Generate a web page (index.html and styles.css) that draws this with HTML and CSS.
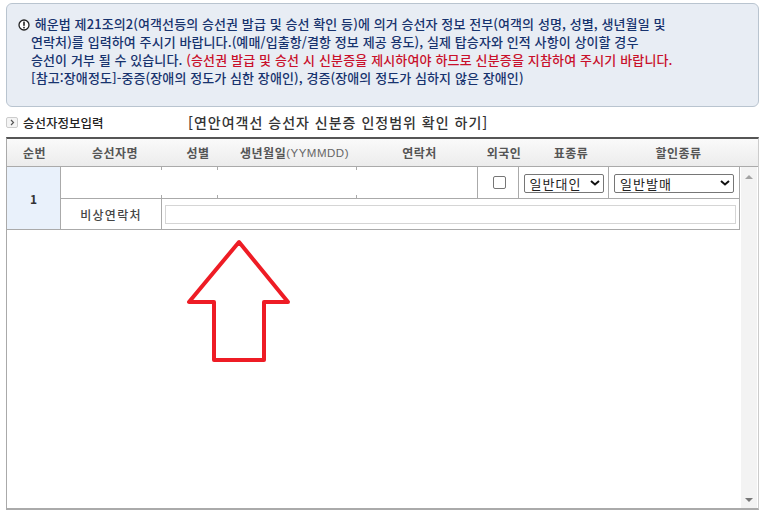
FILE: index.html
```html
<!DOCTYPE html>
<html lang="ko">
<head>
    <meta charset="UTF-8">
    <meta name="viewport" content="width=device-width, initial-scale=1.0">
    <title>승선자정보입력</title>
    <link rel="stylesheet" href="styles.css">
</head>
<body>
    <div class="container">
        <div class="notice">
            <p>
                <svg class="notice-icon" width="12" height="12" viewBox="0 0 12 12">
                    <circle cx="6" cy="6" r="5" fill="#fff" stroke="#222" stroke-width="1.3"/>
                    <rect x="5.2" y="2.6" width="1.6" height="4.2" fill="#222"/>
                    <rect x="5.2" y="7.8" width="1.6" height="1.6" fill="#222"/>
                </svg>
                해운법 제21조의2(여객선등의 승선권 발급 및 승선 확인 등)에 의거 승선자 정보 전부(여객의 성명, 성별, 생년월일 및
            </p>
            <p>연락처)를 입력하여 주시기 바랍니다.(예매/입출항/결항 정보 제공 용도), 실제 탑승자와 인적 사항이 상이할 경우</p>
            <p>승선이 거부 될 수 있습니다. <span class="red">(승선권 발급 및 승선 시 신분증을 제시하여야 하므로 신분증을 지참하여 주시기 바랍니다.</span></p>
            <p>[참고:장애정도]-중증(장애의 정도가 심한 장애인), 경증(장애의 정도가 심하지 않은 장애인)</p>
        </div>

        <div class="title-row">
            <div class="title">
                <span class="title-icon">
                    <svg width="5" height="7" viewBox="0 0 5 7"><path d="M1 1l2.5 2.5L1 6" fill="none" stroke="#555" stroke-width="1.2"/></svg>
                </span>
                승선자정보입력
            </div>
            <a class="id-link">[연안여객선 승선자 신분증 인정범위 확인 하기]</a>
        </div>

        <div class="panel">
            <div class="head">
                <div>순번</div>
                <div>승선자명</div>
                <div>성별</div>
                <div>생년월일<span class="thin">(YYMMDD)</span></div>
                <div>연락처</div>
                <div>외국인</div>
                <div>표종류</div>
                <div>할인종류</div>
            </div>

            <div class="body">
                <div class="rows">
                    <div class="record">
                        <div class="num">1</div>
                        <div class="fields">
                            <div class="row-top">
                                <div class="cell"></div>
                                <div class="cell"></div>
                                <div class="cell"></div>
                                <div class="cell"></div>
                                <div class="cell center"><span class="check"></span></div>
                                <div class="cell center">
                                    <div class="select ticket">일반대인<svg width="10" height="6" viewBox="0 0 10 6"><path d="M1 1l4 3.5L9 1" fill="none" stroke="#111" stroke-width="2"/></svg></div>
                                </div>
                                <div class="cell center">
                                    <div class="select discount">일반발매<svg width="10" height="6" viewBox="0 0 10 6"><path d="M1 1l4 3.5L9 1" fill="none" stroke="#111" stroke-width="2"/></svg></div>
                                </div>
                            </div>
                            <div class="row-bottom">
                                <div class="label">비상연락처</div>
                                <div class="input-cell"><div class="text-input"></div></div>
                            </div>
                        </div>
                    </div>
                </div>

                <div class="scrollbar">
                    <span class="up"></span>
                    <span class="down"></span>
                </div>

                <svg class="arrow" width="106" height="124" viewBox="0 0 106 124">
                    <path d="M53 3L3 63H28V121H78V63H102Z" fill="none" stroke="#ee1c25" stroke-width="4" stroke-linejoin="round"/>
                </svg>
            </div>
        </div>
    </div>
</body>
</html>
```

FILE: styles.css
```css
* {
    box-sizing: border-box;
}

body {
    margin: 0;
    background-color: #fff;
    font-family: "Noto Sans CJK KR", "Liberation Sans", sans-serif;
    color: #333;
}

.container {
    width: 753px;
    height: 507px;
    margin: 3px 0 0 6px;
    display: flex;
    flex-direction: column;
}

.notice {
    height: 104px;
    flex-shrink: 0;
    padding: 11px 12px 0 12px;
    background-color: #e8edf4;
    border: 1px solid #b9c4cf;
    border-radius: 6px;
    font-size: 13px;
    font-weight: 500;
    letter-spacing: 0.09px;
    color: #17336e;
}

.notice p {
    margin: 0 0 0 12px;
    height: 18px;
    line-height: 18px;
    white-space: nowrap;
}

.notice-icon {
    margin: 0 1px 0 -13px;
    vertical-align: -2px;
}

.red {
    color: #c9102b;
    letter-spacing: 0.15px;
}

.title-row {
    display: flex;
    align-items: center;
    height: 30px;
    flex-shrink: 0;
}

.title {
    width: 182px;
    display: flex;
    align-items: center;
    gap: 5px;
    font-size: 12.5px;
    font-weight: 500;
    color: #222;
}

.title-icon {
    width: 12px;
    height: 11px;
    display: flex;
    align-items: center;
    justify-content: center;
    border: 1px solid #ccc;
    border-radius: 2px;
    background-color: #f4f4f4;
}

.id-link {
    font-size: 14px;
    font-weight: 500;
    letter-spacing: 1px;
    color: #333;
}

.panel {
    flex: 1;
    display: flex;
    flex-direction: column;
    border-top: 2px solid #555;
    border-left: 1px solid #aaa;
    border-right: 1px solid #ccc;
    border-bottom: 2px solid #aaa;
}

.head {
    display: grid;
    grid-template-columns: 55px 106px 60px 133px 117px 52px 82px 133px;
    height: 28px;
    flex-shrink: 0;
    background: linear-gradient(#fafafa, #ececec);
    border-bottom: 1px solid #aaa;
    font-size: 12px;
    font-weight: 700;
    color: #555;
    letter-spacing: 0.5px;
}

.head div {
    display: flex;
    align-items: center;
    justify-content: center;
}

.thin {
    font-weight: 400;
    font-size: 11.5px;
    font-family: "Liberation Sans", sans-serif;
    color: #666;
}

.body {
    flex: 1;
    display: flex;
    position: relative;
}

.rows {
    width: 733px;
}

.record {
    display: flex;
    height: 63px;
    border-bottom: 1px solid #aaa;
    border-right: 1px solid #aaa;
}

.num {
    width: 54px;
    display: flex;
    align-items: center;
    justify-content: center;
    background-color: #e9f1fb;
    border-right: 1px solid #aaa;
    font-size: 12px;
    font-weight: 700;
    color: #333;
}

.fields {
    flex: 1;
    display: flex;
    flex-direction: column;
}

.row-top {
    display: grid;
    grid-template-columns: 101px 56px 139px 120px 41px 90px 131px;
    height: 32px;
    border-bottom: 1px solid #aaa;
}

.cell {
    position: relative;
    height: 31px;
}

.cell::before {
    content: "";
    position: absolute;
    left: -1px;
    top: 0;
    width: 1px;
    height: 3px;
    background-color: #aaa;
}

.cell::after {
    content: "";
    position: absolute;
    left: -1px;
    bottom: 0;
    width: 1px;
    height: 3px;
    background-color: #aaa;
}

.cell:first-child::before,
.cell:first-child::after {
    display: none;
}

.center {
    display: flex;
    align-items: center;
    justify-content: center;
    border-left: 1px solid #aaa;
}

.center::before,
.center::after {
    display: none;
}

.check {
    width: 13px;
    height: 13px;
    margin-left: 2px;
    border: 1px solid #767676;
    border-radius: 2px;
    background-color: #fff;
}

.select {
    height: 19px;
    margin-top: 1px;
    display: flex;
    align-items: center;
    justify-content: space-between;
    padding: 0 3px 0 5px;
    border: 1px solid #767676;
    border-radius: 2px;
    font-size: 13px;
    letter-spacing: 1px;
    color: #222;
}

.ticket {
    width: 80px;
}

.discount {
    width: 120px;
}

.row-bottom {
    flex: 1;
    display: flex;
}

.label {
    width: 101px;
    display: flex;
    align-items: center;
    justify-content: center;
    border-right: 1px solid #aaa;
    font-size: 12px;
    font-weight: 500;
    letter-spacing: 1.3px;
    color: #444;
}

.input-cell {
    flex: 1;
    display: flex;
    align-items: center;
    padding: 0 3px;
}

.text-input {
    width: 100%;
    height: 19px;
    border: 1px solid #d5d5d5;
    background-color: #fff;
}

.scrollbar {
    width: 16px;
    margin-left: 1px;
    display: flex;
    flex-direction: column;
    justify-content: space-between;
    align-items: center;
    padding: 8px 0 6px 0;
    background-color: #f3f3f3;
}

.up {
    width: 0;
    height: 0;
    border-left: 4px solid transparent;
    border-right: 4px solid transparent;
    border-bottom: 4px solid #a3a3a3;
}

.down {
    width: 0;
    height: 0;
    border-left: 4px solid transparent;
    border-right: 4px solid transparent;
    border-top: 4px solid #777;
}

.arrow {
    position: absolute;
    left: 179px;
    top: 72px;
}
```
